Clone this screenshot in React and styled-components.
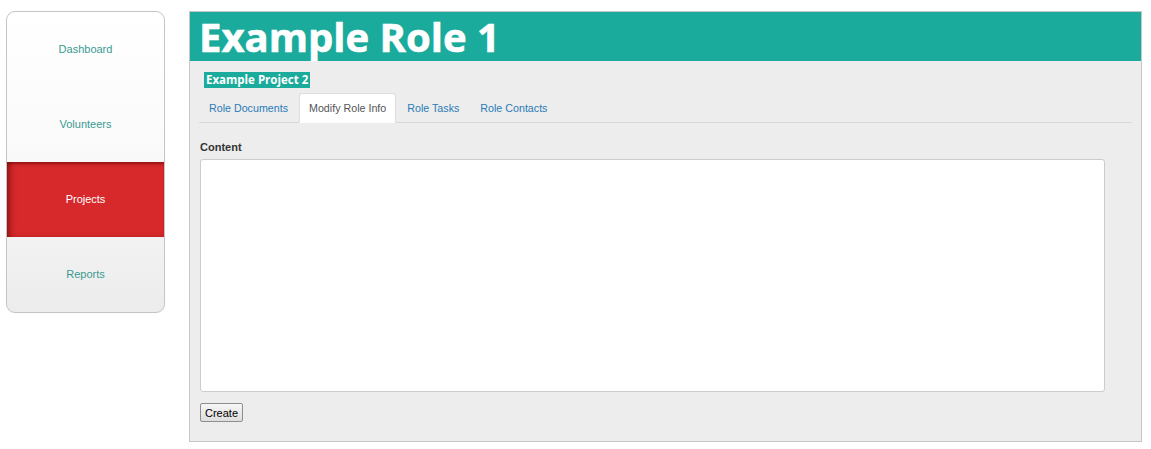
import React from "react";
import styled, { createGlobalStyle } from "styled-components";

const GlobalStyle = createGlobalStyle`
  body {
    margin: 0;
    background: #fff;
    font-family: "Liberation Sans", Arial, sans-serif;
    font-size: 11px;
  }
`;

const navItems = ["Dashboard", "Volunteers", "Projects", "Reports"];
const tabs = ["Role Documents", "Modify Role Info", "Role Tasks", "Role Contacts"];

const App = () => {
  return (
    <>
      <GlobalStyle />
      <Page>
        <Sidebar>
          {navItems.map((item) => (
            <NavItem key={item} $active={item === "Projects"}>
              {item}
            </NavItem>
          ))}
        </Sidebar>
        <Main>
          <Header>
            <Title>Example Role 1</Title>
          </Header>
          <Body>
            <ProjectTag>Example Project 2</ProjectTag>
            <Tabs>
              {tabs.map((tab) => (
                <Tab key={tab} $active={tab === "Modify Role Info"}>
                  {tab}
                </Tab>
              ))}
            </Tabs>
            <Label>Content</Label>
            <TextArea />
            <Button>Create</Button>
          </Body>
        </Main>
      </Page>
    </>
  );
};

export default App;

const Page = styled.div`
  display: flex;
  align-items: flex-start;
  gap: 24px;
  padding: 11px 0 0 6px;
`;

const Sidebar = styled.nav`
  width: 157px;
  border: 1px solid #c4c4c4;
  border-radius: 9px;
  overflow: hidden;
  display: flex;
  flex-direction: column;
  background: linear-gradient(#ffffff, #fbfbfb 40%, #ececec);
`;

const NavItem = styled.div`
  height: 75px;
  display: flex;
  align-items: center;
  justify-content: center;
  padding-bottom: 1px;
  box-sizing: border-box;
  color: ${(p) => (p.$active ? "#ffffff" : "#3a9a91")};
  background: ${(p) => (p.$active ? "#d7292b" : "transparent")};
  box-shadow: ${(p) =>
    p.$active
      ? "inset 5px 0 6px -2px rgba(90, 0, 0, 0.55), inset 0 3px 3px -1px rgba(90, 0, 0, 0.45)"
      : "none"};
  cursor: pointer;
`;

const Main = styled.main`
  width: 951px;
  height: 429px;
  border: 1px solid #c6c6c6;
  background: #ededed;
  display: flex;
  flex-direction: column;
`;

const Header = styled.header`
  height: 49px;
  background: #1bab9c;
  display: flex;
  align-items: center;
  padding: 0 9px;
`;

const Title = styled.h1`
  margin: 0;
  color: #fff;
  font-family: "Open Sans", "DejaVu Sans", sans-serif;
  font-weight: 700;
  font-size: 40px;
  line-height: 1;
  -webkit-text-stroke: 0.6px #fff;
`;

const Body = styled.section`
  padding: 11px 9px 0 9px;
  display: flex;
  flex-direction: column;
  align-items: flex-start;
`;

const ProjectTag = styled.span`
  margin-left: 5px;
  background: #1bab9c;
  color: #fff;
  font-family: "Open Sans", "DejaVu Sans", sans-serif;
  font-weight: 700;
  font-size: 11.5px;
  line-height: 16px;
  padding: 0 2px;
`;

const Tabs = styled.div`
  margin-top: 5px;
  align-self: stretch;
  display: flex;
  gap: 1px;
  border-bottom: 1px solid #d8d8d8;
`;

const Tab = styled.div`
  height: 28px;
  display: flex;
  align-items: center;
  padding: 0 9px;
  margin-bottom: -1px;
  font-size: 10.7px;
  color: ${(p) => (p.$active ? "#555555" : "#2a7bb8")};
  background: ${(p) => (p.$active ? "#ffffff" : "transparent")};
  border: 1px solid ${(p) => (p.$active ? "#dddddd" : "transparent")};
  border-bottom-color: ${(p) => (p.$active ? "#ffffff" : "transparent")};
  border-radius: 3px 3px 0 0;
  cursor: pointer;
`;

const Label = styled.label`
  margin: 18px 0 0 1px;
  font-weight: 700;
  color: #333;
  line-height: 13px;
`;

const TextArea = styled.textarea`
  margin: 5px 0 0 1px;
  width: 905px;
  height: 233px;
  box-sizing: border-box;
  border: 1px solid #cccccc;
  border-radius: 3px;
  background: #fff;
  resize: none;
  outline: none;
`;

const Button = styled.button`
  margin: 11px 0 0 1px;
  height: 19px;
  padding: 0 4px;
  font-family: "Liberation Sans", Arial, sans-serif;
  font-size: 11px;
  color: #000;
  border: 1px solid #8e8e8e;
  border-radius: 2px;
  background: linear-gradient(#f6f6f6, #dedede);
`;
